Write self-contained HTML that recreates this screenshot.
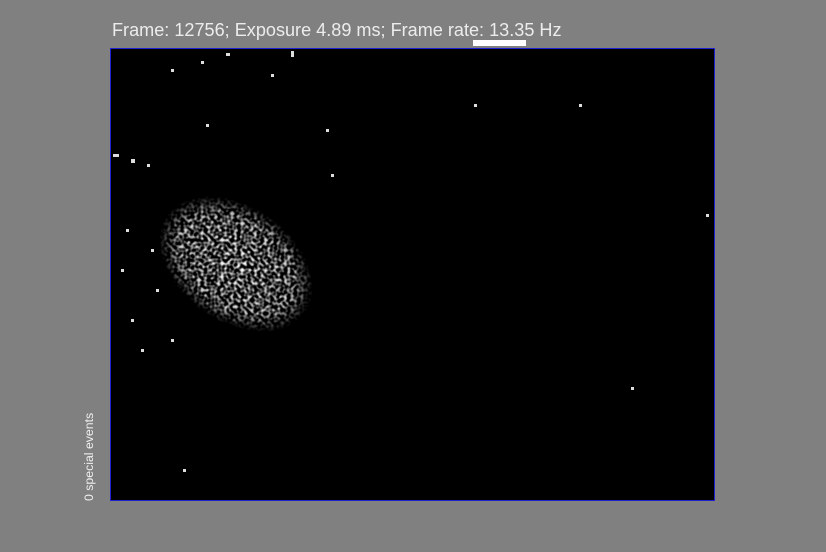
<!DOCTYPE html>
<html><head><style>
html,body{margin:0;padding:0}
body{width:826px;height:552px;background:#808080;position:relative;overflow:hidden;font-family:"Liberation Sans",sans-serif}
.t{position:absolute;left:112px;top:20px;font-size:18.1px;color:#ececec;white-space:nowrap}
.bar{position:absolute;left:473px;top:40px;width:53px;height:6px;background:#fff}
.box{position:absolute;left:110px;top:48px;width:603px;height:451px;background:#000;border:1px solid #2020d0}
.v{position:absolute;left:82px;top:501px;transform:rotate(-90deg);transform-origin:0 0;font-size:12.3px;color:#f0f0f0;white-space:nowrap}
</style></head><body>
<div class="t">Frame: 12756; Exposure 4.89 ms; Frame rate: 13.35 Hz</div>
<div class="bar"></div>
<div class="box">
<svg width="603" height="451" xmlns="http://www.w3.org/2000/svg">
<defs>
<radialGradient id="g" cx="50%" cy="50%" r="50%">
<stop offset="0" stop-color="#fff"/><stop offset="0.75" stop-color="#ccc"/><stop offset="1" stop-color="#000"/></radialGradient>
<filter id="n" x="0" y="0" width="100%" height="100%">
<feTurbulence type="fractalNoise" baseFrequency="0.3" numOctaves="1" seed="3" result="t"/>
<feColorMatrix in="t" type="matrix" values="0 0 0 0 0  0 0 0 0 0  0 0 0 0 0  3 0 0 0 -1.2" result="a"/>
<feComposite in="SourceGraphic" in2="a" operator="in"/>
</filter>
</defs>
<g filter="url(#n)">
<ellipse cx="125" cy="215" rx="85" ry="58" fill="url(#g)" transform="rotate(35 125 215)"/>
</g>
<g fill="#ddd">
<rect x="2" y="105" width="6" height="3"/><rect x="20" y="110" width="4" height="4"/><rect x="36" y="115" width="3" height="3"/>
<rect x="60" y="20" width="3" height="3"/><rect x="90" y="12" width="3" height="3"/><rect x="115" y="4" width="4" height="3"/><rect x="180" y="2" width="3" height="6"/>
<rect x="160" y="25" width="3" height="3"/><rect x="95" y="75" width="3" height="3"/><rect x="220" y="125" width="3" height="3"/><rect x="215" y="80" width="3" height="3"/>
<rect x="30" y="300" width="3" height="3"/><rect x="60" y="290" width="3" height="3"/><rect x="20" y="270" width="3" height="3"/><rect x="72" y="420" width="3" height="3"/>
<rect x="363" y="55" width="3" height="3"/><rect x="468" y="55" width="3" height="3"/><rect x="520" y="338" width="3" height="3"/><rect x="595" y="165" width="3" height="3"/>
<rect x="15" y="180" width="3" height="3"/><rect x="40" y="200" width="3" height="3"/><rect x="45" y="240" width="3" height="3"/><rect x="10" y="220" width="3" height="3"/>
</g>
</svg>
</div>
<div class="v">0 special events</div>
</body></html>
